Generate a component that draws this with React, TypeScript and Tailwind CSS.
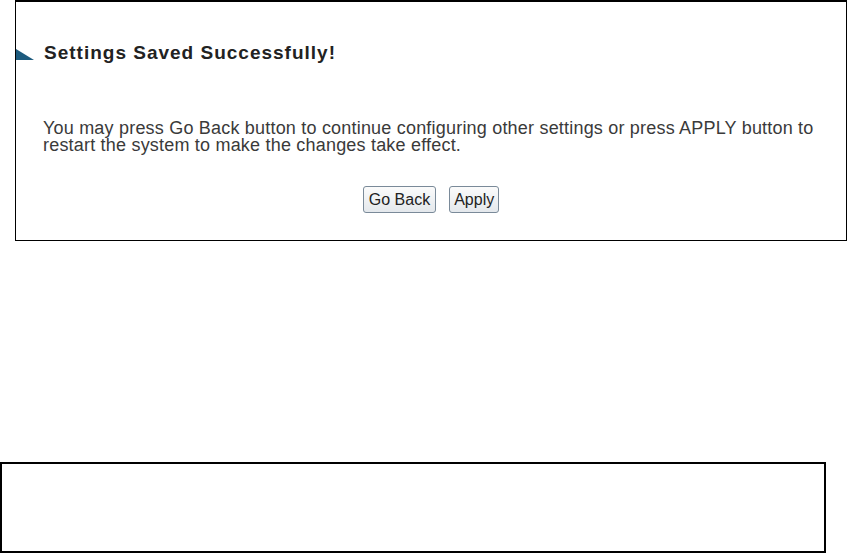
import React from 'react';

const App: React.FC = () => {
  return (
    <div className="w-[848px] h-[553px] bg-white overflow-hidden font-['Liberation_Sans',Arial,sans-serif] text-[#333]">
      <div className="ml-[15px] w-[832px] h-[241px] border border-black border-t-2 flex flex-col">
        <div className="mt-[43px] flex items-end h-[17px]">
          <svg width="18" height="11" viewBox="0 0 18 11" className="mb-[2px]">
            <polygon points="0,0 18,11 0,11" fill="#1d5b7e" />
          </svg>
          <h1 className="ml-[10px] text-[19px] tracking-[1px] leading-none font-bold text-[#222]">Settings Saved Successfully!</h1>
        </div>
        <p className="mt-[58px] ml-[27px] mr-[10px] text-[18px] tracking-[0.2px] leading-[17px] text-[#3a3a3a]">
          You may press Go Back button to continue configuring other settings or press APPLY button to restart the system to make the changes take effect.
        </p>
        <div className="mt-[32px] flex justify-center gap-[13px]">
          <button className="h-[27px] px-[5px] rounded-[3px] border border-[#7a8a99] bg-gradient-to-b from-[#fbfbfb] to-[#e4e8ec] text-[16px] leading-none text-[#222]">
            Go Back
          </button>
          <button className="h-[27px] px-[4px] rounded-[3px] border border-[#7a8a99] bg-gradient-to-b from-[#fbfbfb] to-[#e4e8ec] text-[16px] leading-none text-[#222]">
            Apply
          </button>
        </div>
      </div>
      <div className="mt-[221px] w-[826px] h-[91px] border-2 border-black" />
    </div>
  );
};

export default App;
